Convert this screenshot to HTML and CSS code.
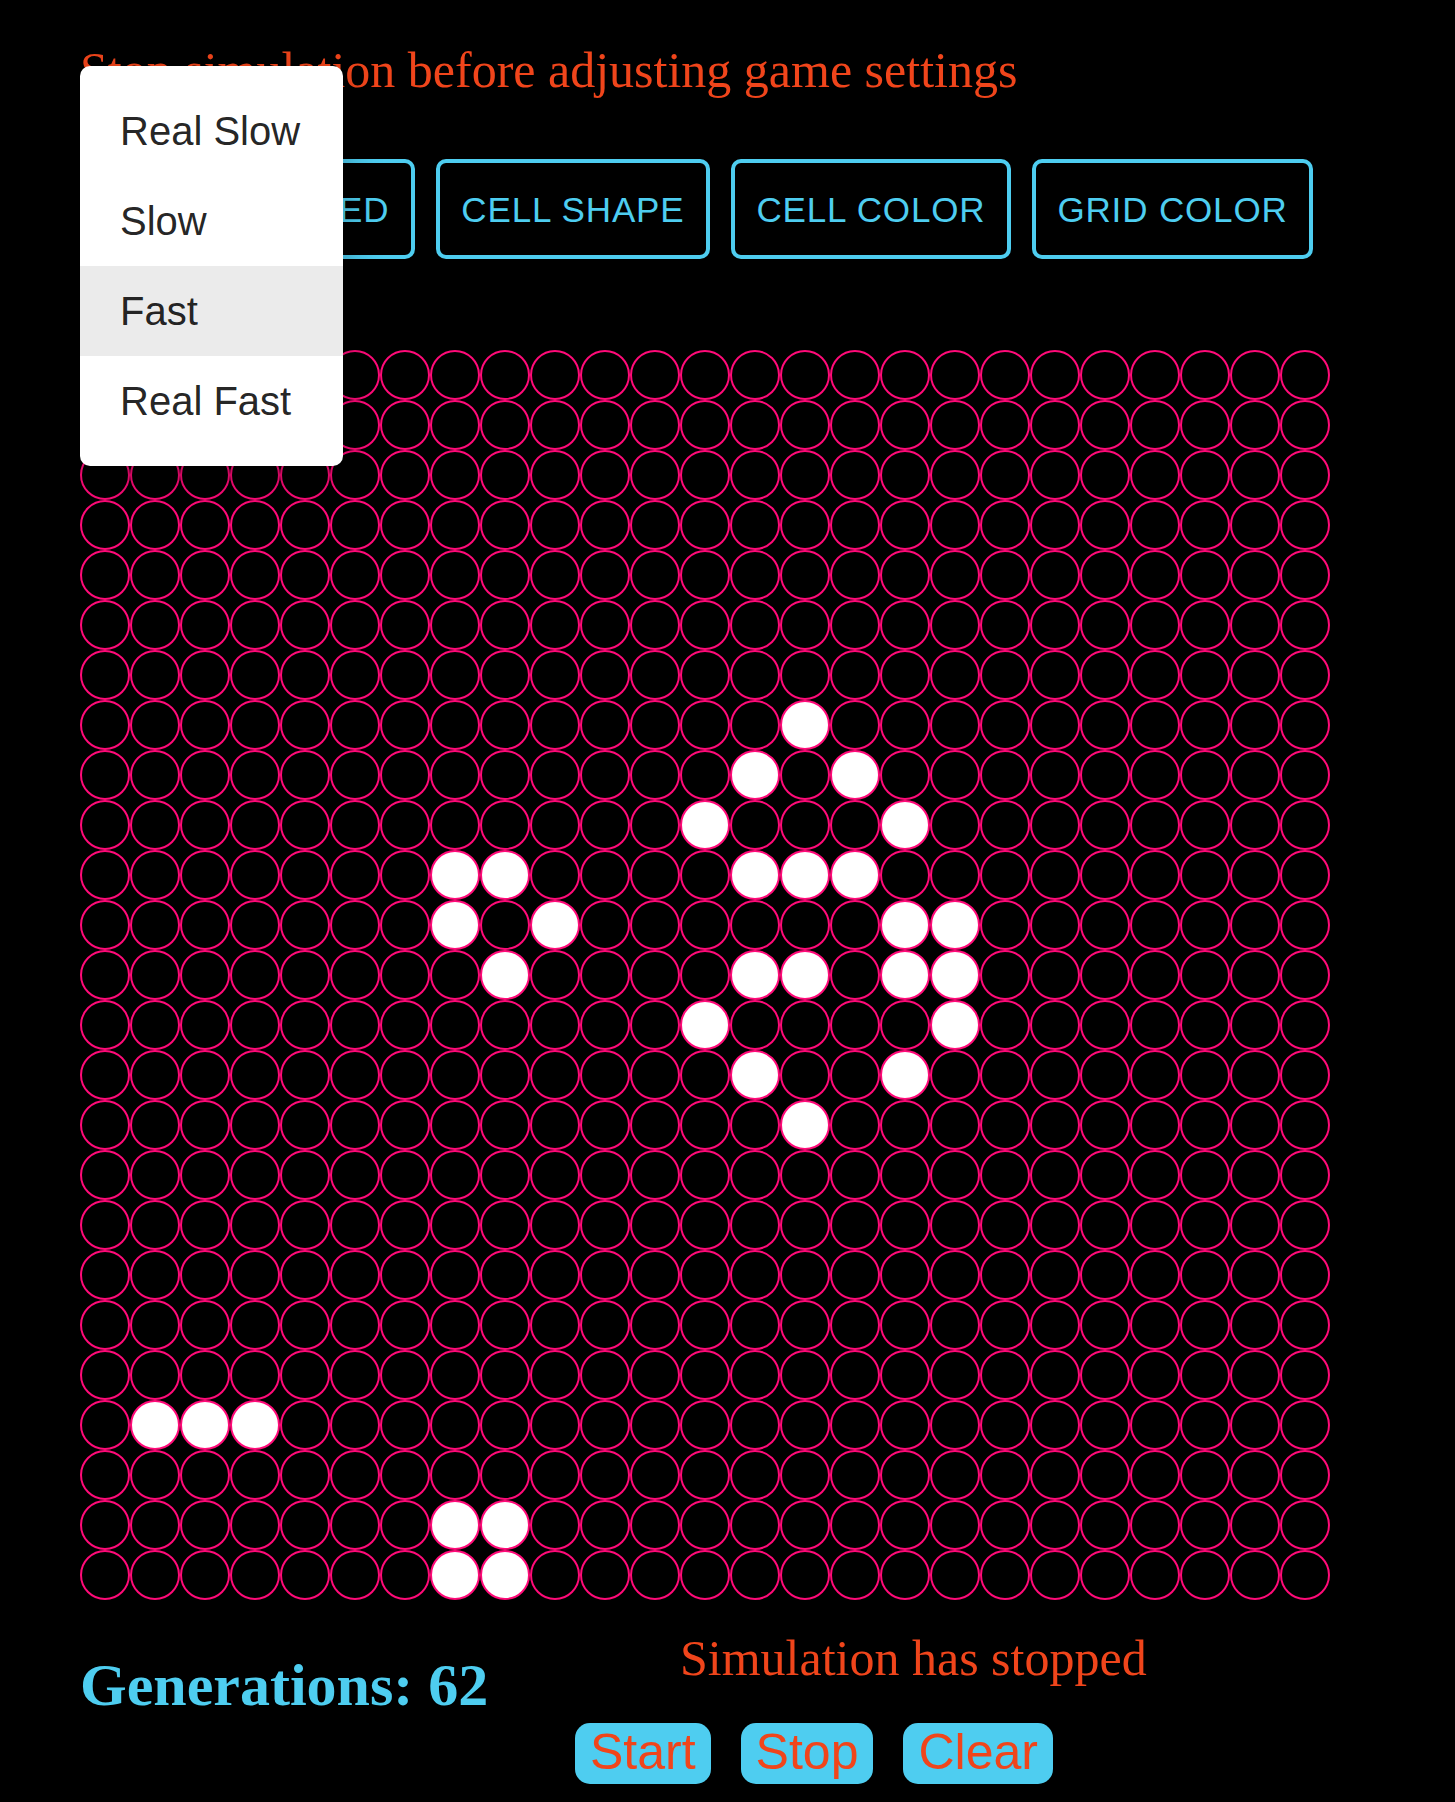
FILE: index.html
```html
<!DOCTYPE html>
<html lang="en">
<head>
<meta charset="utf-8">
<title>Game of Life</title>
<link rel="stylesheet" href="styles.css">
</head>
<body>
<div class="app">
  <h1 class="notice">Stop simulation before adjusting game settings</h1>
  <div class="settings">
    <button class="setting setting-first">Change Speed</button>
    <button class="setting">Cell Shape</button>
    <button class="setting">Cell Color</button>
    <button class="setting">Grid Color</button>
  </div>
  <div class="board">
    <i></i><i></i><i></i><i></i><i></i> <i></i><i></i><i></i><i></i><i></i> <i></i><i></i><i></i><i></i><i></i> <i></i><i></i><i></i><i></i><i></i> <i></i><i></i><i></i><i></i><i></i>
    <i></i><i></i><i></i><i></i><i></i> <i></i><i></i><i></i><i></i><i></i> <i></i><i></i><i></i><i></i><i></i> <i></i><i></i><i></i><i></i><i></i> <i></i><i></i><i></i><i></i><i></i>
    <i></i><i></i><i></i><i></i><i></i> <i></i><i></i><i></i><i></i><i></i> <i></i><i></i><i></i><i></i><i></i> <i></i><i></i><i></i><i></i><i></i> <i></i><i></i><i></i><i></i><i></i>
    <i></i><i></i><i></i><i></i><i></i> <i></i><i></i><i></i><i></i><i></i> <i></i><i></i><i></i><i></i><i></i> <i></i><i></i><i></i><i></i><i></i> <i></i><i></i><i></i><i></i><i></i>
    <i></i><i></i><i></i><i></i><i></i> <i></i><i></i><i></i><i></i><i></i> <i></i><i></i><i></i><i></i><i></i> <i></i><i></i><i></i><i></i><i></i> <i></i><i></i><i></i><i></i><i></i>
    <i></i><i></i><i></i><i></i><i></i> <i></i><i></i><i></i><i></i><i></i> <i></i><i></i><i></i><i></i><i></i> <i></i><i></i><i></i><i></i><i></i> <i></i><i></i><i></i><i></i><i></i>
    <i></i><i></i><i></i><i></i><i></i> <i></i><i></i><i></i><i></i><i></i> <i></i><i></i><i></i><i></i><i></i> <i></i><i></i><i></i><i></i><i></i> <i></i><i></i><i></i><i></i><i></i>
    <i></i><i></i><i></i><i></i><i></i> <i></i><i></i><i></i><i></i><i></i> <i></i><i></i><i></i><i></i><i class="on"></i> <i></i><i></i><i></i><i></i><i></i> <i></i><i></i><i></i><i></i><i></i>
    <i></i><i></i><i></i><i></i><i></i> <i></i><i></i><i></i><i></i><i></i> <i></i><i></i><i></i><i class="on"></i><i></i> <i class="on"></i><i></i><i></i><i></i><i></i> <i></i><i></i><i></i><i></i><i></i>
    <i></i><i></i><i></i><i></i><i></i> <i></i><i></i><i></i><i></i><i></i> <i></i><i></i><i class="on"></i><i></i><i></i> <i></i><i class="on"></i><i></i><i></i><i></i> <i></i><i></i><i></i><i></i><i></i>
    <i></i><i></i><i></i><i></i><i></i> <i></i><i></i><i class="on"></i><i class="on"></i><i></i> <i></i><i></i><i></i><i class="on"></i><i class="on"></i> <i class="on"></i><i></i><i></i><i></i><i></i> <i></i><i></i><i></i><i></i><i></i>
    <i></i><i></i><i></i><i></i><i></i> <i></i><i></i><i class="on"></i><i></i><i class="on"></i> <i></i><i></i><i></i><i></i><i></i> <i></i><i class="on"></i><i class="on"></i><i></i><i></i> <i></i><i></i><i></i><i></i><i></i>
    <i></i><i></i><i></i><i></i><i></i> <i></i><i></i><i></i><i class="on"></i><i></i> <i></i><i></i><i></i><i class="on"></i><i class="on"></i> <i></i><i class="on"></i><i class="on"></i><i></i><i></i> <i></i><i></i><i></i><i></i><i></i>
    <i></i><i></i><i></i><i></i><i></i> <i></i><i></i><i></i><i></i><i></i> <i></i><i></i><i class="on"></i><i></i><i></i> <i></i><i></i><i class="on"></i><i></i><i></i> <i></i><i></i><i></i><i></i><i></i>
    <i></i><i></i><i></i><i></i><i></i> <i></i><i></i><i></i><i></i><i></i> <i></i><i></i><i></i><i class="on"></i><i></i> <i></i><i class="on"></i><i></i><i></i><i></i> <i></i><i></i><i></i><i></i><i></i>
    <i></i><i></i><i></i><i></i><i></i> <i></i><i></i><i></i><i></i><i></i> <i></i><i></i><i></i><i></i><i class="on"></i> <i></i><i></i><i></i><i></i><i></i> <i></i><i></i><i></i><i></i><i></i>
    <i></i><i></i><i></i><i></i><i></i> <i></i><i></i><i></i><i></i><i></i> <i></i><i></i><i></i><i></i><i></i> <i></i><i></i><i></i><i></i><i></i> <i></i><i></i><i></i><i></i><i></i>
    <i></i><i></i><i></i><i></i><i></i> <i></i><i></i><i></i><i></i><i></i> <i></i><i></i><i></i><i></i><i></i> <i></i><i></i><i></i><i></i><i></i> <i></i><i></i><i></i><i></i><i></i>
    <i></i><i></i><i></i><i></i><i></i> <i></i><i></i><i></i><i></i><i></i> <i></i><i></i><i></i><i></i><i></i> <i></i><i></i><i></i><i></i><i></i> <i></i><i></i><i></i><i></i><i></i>
    <i></i><i></i><i></i><i></i><i></i> <i></i><i></i><i></i><i></i><i></i> <i></i><i></i><i></i><i></i><i></i> <i></i><i></i><i></i><i></i><i></i> <i></i><i></i><i></i><i></i><i></i>
    <i></i><i></i><i></i><i></i><i></i> <i></i><i></i><i></i><i></i><i></i> <i></i><i></i><i></i><i></i><i></i> <i></i><i></i><i></i><i></i><i></i> <i></i><i></i><i></i><i></i><i></i>
    <i></i><i class="on"></i><i class="on"></i><i class="on"></i><i></i> <i></i><i></i><i></i><i></i><i></i> <i></i><i></i><i></i><i></i><i></i> <i></i><i></i><i></i><i></i><i></i> <i></i><i></i><i></i><i></i><i></i>
    <i></i><i></i><i></i><i></i><i></i> <i></i><i></i><i></i><i></i><i></i> <i></i><i></i><i></i><i></i><i></i> <i></i><i></i><i></i><i></i><i></i> <i></i><i></i><i></i><i></i><i></i>
    <i></i><i></i><i></i><i></i><i></i> <i></i><i></i><i class="on"></i><i class="on"></i><i></i> <i></i><i></i><i></i><i></i><i></i> <i></i><i></i><i></i><i></i><i></i> <i></i><i></i><i></i><i></i><i></i>
    <i></i><i></i><i></i><i></i><i></i> <i></i><i></i><i class="on"></i><i class="on"></i><i></i> <i></i><i></i><i></i><i></i><i></i> <i></i><i></i><i></i><i></i><i></i> <i></i><i></i><i></i><i></i><i></i>
  </div>
  <div class="footer">
    <h2 class="gens">Generations: 62</h2>
    <div class="side">
      <p class="status">Simulation has stopped</p>
      <div class="actions">
        <button class="action">Start</button>
        <button class="action">Stop</button>
        <button class="action">Clear</button>
      </div>
    </div>
  </div>
</div>
<ul class="menu">
  <li class="menu-item">Real Slow</li>
  <li class="menu-item">Slow</li>
  <li class="menu-item selected">Fast</li>
  <li class="menu-item">Real Fast</li>
</ul>
</body>
</html>
```
FILE: styles.css
```css
html, body {
  margin: 0;
  padding: 0;
  background: #000;
}

body {
  width: 1455px;
  min-height: 1802px;
  position: relative;
  font-family: "Liberation Serif", "Times New Roman", serif;
}

.app {
  padding: 45px 0 0 80px;
}

.notice {
  margin: 0;
  font-family: "Liberation Serif", "Times New Roman", serif;
  font-weight: normal;
  font-size: 50px;
  line-height: 50px;
  color: #f0451b;
}

.settings {
  display: flex;
  gap: 21px;
  margin-top: 64px;
}

.setting {
  height: 100px;
  padding: 0 21.5px;
  border: 4px solid #4ecdf0;
  border-radius: 10px;
  background: transparent;
  color: #4ecdf0;
  font-family: "Liberation Sans", Arial, sans-serif;
  font-size: 35px;
  line-height: 1;
  letter-spacing: 0.85px;
  text-transform: uppercase;
  white-space: nowrap;
}

.setting-first {
  padding-left: 17px;
}

.board {
  display: grid;
  grid-template-columns: repeat(25, 50px);
  grid-auto-rows: 50px;
  width: 1250px;
  margin-top: 91px;
}

.board i {
  display: block;
  box-sizing: border-box;
  border: 2px solid #ff0a78;
  border-radius: 50%;
}

.board i.on {
  background: #fff;
}

.footer {
  display: flex;
  align-items: flex-start;
}

.gens {
  flex: 0 0 495px;
  margin: 55px 0 0;
  font-family: "Liberation Serif", "Times New Roman", serif;
  font-weight: bold;
  font-size: 60px;
  line-height: 60px;
  color: #4ecdf0;
}

.side {
  display: flex;
  flex-direction: column;
}

.status {
  margin: 33px 0 0 105px;
  font-family: "Liberation Serif", "Times New Roman", serif;
  font-size: 50px;
  line-height: 50px;
  color: #f0451b;
}

.actions {
  display: flex;
  gap: 30px;
  margin-top: 40px;
}

.action {
  padding: 1px 15px 2.5px;
  border: none;
  border-radius: 15px;
  background: #4ecdf0;
  color: #f0451b;
  font-family: "Liberation Sans", Arial, sans-serif;
  font-size: 50px;
  line-height: 57.5px;
}

.menu {
  position: absolute;
  left: 80px;
  top: 66px;
  width: 263px;
  margin: 0;
  padding: 20px 0;
  list-style: none;
  background: #fff;
  border-radius: 10px;
  box-shadow: 0 12px 38px rgba(0, 0, 0, 0.3);
}

.menu-item {
  height: 60px;
  padding: 15px 40px;
  font-family: "Liberation Sans", Arial, sans-serif;
  font-size: 40px;
  line-height: 60px;
  color: rgba(0, 0, 0, 0.87);
  white-space: nowrap;
}

.menu-item.selected {
  background: #ebebeb;
}
```
